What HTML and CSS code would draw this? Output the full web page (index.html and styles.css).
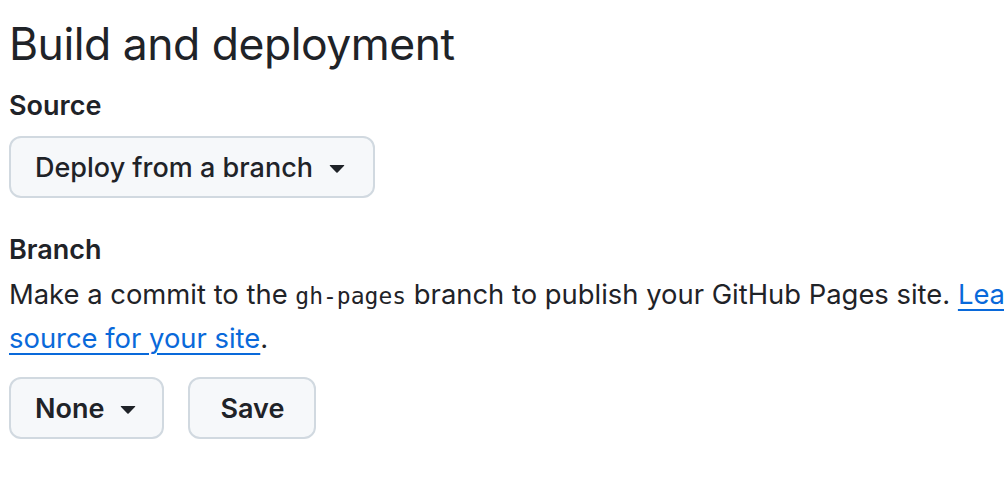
FILE: index.html
```html
<!DOCTYPE html>
<html lang="en">
<head>
<meta charset="utf-8">
<title>Build and deployment</title>
<link rel="stylesheet" href="styles.css">
</head>
<body>
<main class="page">
  <h2 class="heading">Build and deployment</h2>
  <section class="field">
    <h3 class="label">Source</h3>
    <button class="btn btn-wide" type="button">
      <span>Deploy from a branch</span>
      <svg class="caret" viewBox="0 0 16 16" width="32" height="32" aria-hidden="true"><path d="m4.427 7.427 3.396 3.396a.25.25 0 0 0 .354 0l3.396-3.396A.25.25 0 0 0 11.396 7H4.604a.25.25 0 0 0-.177.427Z"/></svg>
    </button>
  </section>
  <section class="field field-branch">
    <h3 class="label label-tight">Branch</h3>
    <p class="note">Make a commit to the <code class="mono">gh-pages</code> branch to publish your GitHub Pages site. <a class="link" href="#">Learn more about configuring the publishing<br>source for your site</a>.</p>
    <div class="actions">
      <button class="btn btn-bold" type="button">
        <span>None</span>
        <svg class="caret" viewBox="0 0 16 16" width="32" height="32" aria-hidden="true"><path d="m4.427 7.427 3.396 3.396a.25.25 0 0 0 .354 0l3.396-3.396A.25.25 0 0 0 11.396 7H4.604a.25.25 0 0 0-.177.427Z"/></svg>
      </button>
      <button class="btn btn-bold btn-save" type="button">Save</button>
    </div>
  </section>
</main>
</body>
</html>
```
FILE: styles.css
```css
html, body {
  margin: 0;
  padding: 0;
  background: #ffffff;
  overflow: hidden;
}
body {
  font-family: Inter, "Liberation Sans", sans-serif;
  color: #1f2328;
  width: 1004px;
  height: 480px;
}
.page {
  padding: 14px 0 0 9px;
}
.heading {
  margin: 0;
  font-size: 44.5px;
  font-weight: 400;
  line-height: 60px;
  letter-spacing: -0.5px;
}
.field {
  margin-top: 14px;
}
.field-branch {
  margin-top: 34px;
}
.label {
  margin: 0 0 12px;
  font-size: 27px;
  font-weight: 600;
  line-height: 36px;
}
.label-tight {
  margin-bottom: 5px;
}
.btn {
  display: inline-flex;
  align-items: center;
  gap: 8px;
  height: 62px;
  padding: 0 24px;
  border: 2px solid #d1d9e0;
  border-radius: 12px;
  background: #f6f8fa;
  color: #1f2328;
  font-family: inherit;
  font-size: 27px;
  font-weight: 500;
  box-sizing: border-box;
}
.btn-bold {
  font-weight: 600;
  padding: 0 22px 0 24px;
}
.caret {
  fill: #1f2328;
  margin-right: -4px;
}
.btn-save {
  padding: 0 30px;
}
.note {
  margin: 0;
  font-size: 27.4px;
  line-height: 42px;
  white-space: nowrap;
}
.mono {
  font-family: "DejaVu Sans Mono", "Liberation Mono", monospace;
  font-size: 23px;
}
.link {
  color: #0969da;
  text-decoration: underline;
  text-underline-offset: 5px;
  text-decoration-thickness: 2px;
}
.actions {
  display: flex;
  gap: 24px;
  margin-top: 18px;
}
```
